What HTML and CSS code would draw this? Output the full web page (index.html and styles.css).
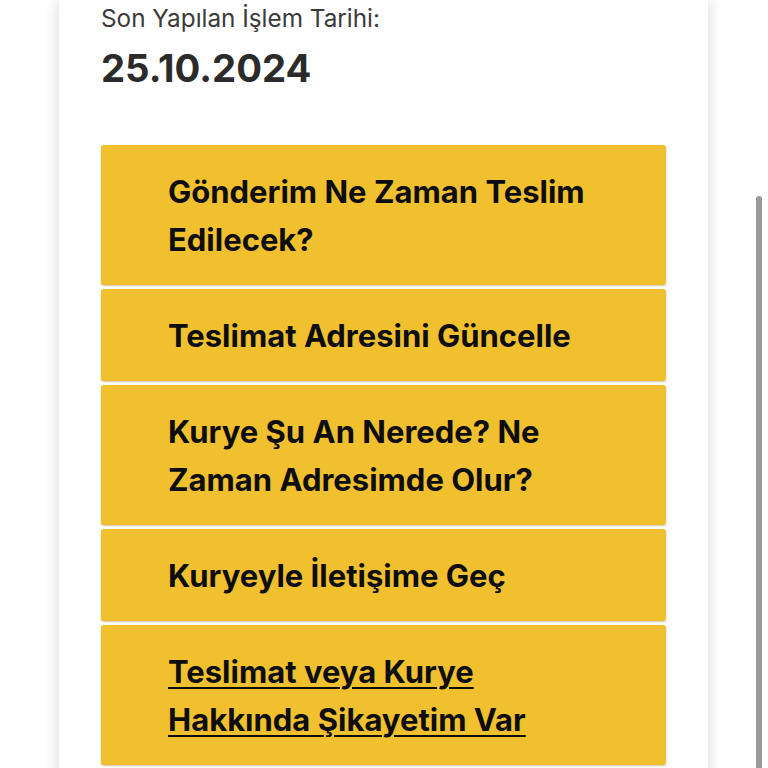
FILE: index.html
```html
<!DOCTYPE html>
<html lang="tr">
<head>
<meta charset="utf-8">
<link rel="stylesheet" href="styles.css">
</head>
<body>
<div class="page">
  <main class="card">
    <p class="label">Son Yapılan İşlem Tarihi:</p>
    <p class="date">25.10.2024</p>
    <nav class="actions">
      <a class="action">Gönderim Ne Zaman Teslim Edilecek?</a>
      <a class="action">Teslimat Adresini Güncelle</a>
      <a class="action">Kurye Şu An Nerede? Ne Zaman Adresimde Olur?</a>
      <a class="action">Kuryeyle İletişime Geç</a>
      <a class="action underline">Teslimat veya Kurye Hakkında Şikayetim Var</a>
    </nav>
  </main>
</div>
<div class="scroll-thumb"></div>
</body>
</html>
```
FILE: styles.css
```css
html, body {
  margin: 0;
  padding: 0;
  background: #ffffff;
  height: 768px;
  overflow: hidden;
}
body {
  font-family: Inter, "Noto Sans", sans-serif;
}
.page {
  padding-left: 59px;
}
.card {
  width: 649px;
  box-sizing: border-box;
  background: #fff;
  box-shadow: 0 0 14px rgba(0, 0, 0, 0.16);
  padding: 2px 42px 0;
  min-height: 900px;
}
.label {
  margin: 0;
  font-size: 24.3px;
  line-height: 32px;
  color: #3a3a3a;
  font-weight: 400;
}
.date {
  margin: 9px 0 0;
  font-size: 38.3px;
  line-height: 50px;
  font-weight: 700;
  color: #2b2b2b;
}
.actions {
  margin-top: 52px;
  display: flex;
  flex-direction: column;
  gap: 4px;
}
.action {
  display: block;
  background: #f0c02f;
  border-radius: 3px;
  box-shadow: 0 1px 2px rgba(120, 90, 0, 0.35);
  padding: 23px 67px 21px;
  font-size: 31px;
  line-height: 48px;
  font-weight: 700;
  color: #0d0d0d;
  text-decoration: none;
}
.action.underline {
  text-decoration: underline;
  text-underline-offset: 4px;
  text-decoration-thickness: 2px;
}
.scroll-thumb {
  position: absolute;
  left: 756px;
  top: 196px;
  width: 6px;
  height: 580px;
  border-radius: 3px;
  background: #9b9b9b;
}
```
